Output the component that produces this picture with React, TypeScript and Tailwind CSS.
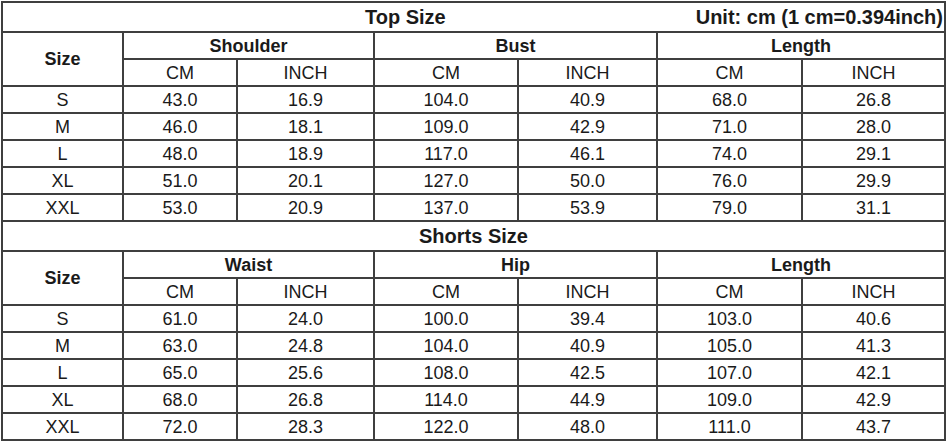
const topRows = [
  ["S", "43.0", "16.9", "104.0", "40.9", "68.0", "26.8"],
  ["M", "46.0", "18.1", "109.0", "42.9", "71.0", "28.0"],
  ["L", "48.0", "18.9", "117.0", "46.1", "74.0", "29.1"],
  ["XL", "51.0", "20.1", "127.0", "50.0", "76.0", "29.9"],
  ["XXL", "53.0", "20.9", "137.0", "53.9", "79.0", "31.1"],
];

const shortRows = [
  ["S", "61.0", "24.0", "100.0", "39.4", "103.0", "40.6"],
  ["M", "63.0", "24.8", "104.0", "40.9", "105.0", "41.3"],
  ["L", "65.0", "25.6", "108.0", "42.5", "107.0", "42.1"],
  ["XL", "68.0", "26.8", "114.0", "44.9", "109.0", "42.9"],
  ["XXL", "72.0", "28.3", "122.0", "48.0", "111.0", "43.7"],
];

const cell = "bg-white flex items-center justify-center leading-none";

function Section({ groups, rows }: { groups: string[]; rows: string[][] }) {
  return (
    <>
      <div className={`${cell} row-span-2 font-bold`}>Size</div>
      {groups.map((g) => (
        <div key={g} className={`${cell} col-span-2 font-bold`}>
          {g}
        </div>
      ))}
      {groups.map((g) => (
        <div key={g + "-u"} className="contents">
          <div className={cell}>CM</div>
          <div className={cell}>INCH</div>
        </div>
      ))}
      {rows.map((r) =>
        r.map((v, i) => (
          <div key={r[0] + i} className={cell}>
            {v}
          </div>
        ))
      )}
    </>
  );
}

export default function App() {
  return (
    <div
      className="w-[948px] h-[442px] bg-white text-[#1a1a1a] text-[18px]"
      style={{ fontFamily: "'Liberation Sans', Arial, sans-serif" }}
    >
      <div className="ml-[1px] pt-[1px]">
        <div className="inline-grid grid-cols-[119px_112px_135px_142px_137px_143px_141px] grid-rows-[28px_repeat(7,25px)_28px_repeat(7,25px)] gap-[2px] p-[2px] bg-[#3f3f3f]">
          <div className="bg-white col-span-7 flex items-center font-bold text-[20px] leading-none">
            <span className="flex-1 text-center pl-[112px]">Top Size</span>
            <span className="pr-[1px]">Unit: cm (1 cm=0.394inch)</span>
          </div>
          <Section groups={["Shoulder", "Bust", "Length"]} rows={topRows} />
          <div className="bg-white col-span-7 flex items-center justify-center font-bold text-[20px] leading-none">
            Shorts Size
          </div>
          <Section groups={["Waist", "Hip", "Length"]} rows={shortRows} />
        </div>
      </div>
    </div>
  );
}
